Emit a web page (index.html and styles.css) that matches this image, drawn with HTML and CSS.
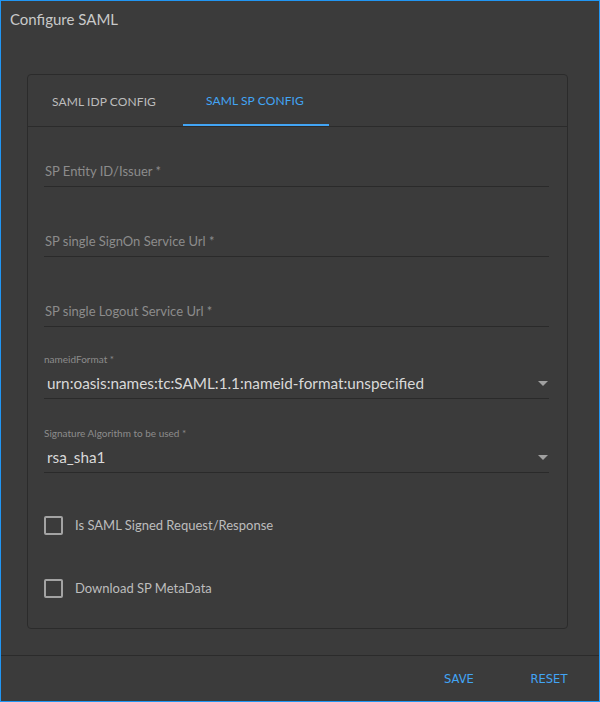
FILE: index.html
```html
<!DOCTYPE html>
<html>
<head>
<meta charset="utf-8">
<link rel="stylesheet" href="styles.css">
</head>
<body>
<div class="dialog">
  <div class="dialog-title">Configure SAML</div>
  <div class="dialog-content">
    <div class="card">
      <div class="tabs">
        <div class="tab">SAML IDP CONFIG</div>
        <div class="tab active">SAML SP CONFIG</div>
      </div>
      <div class="form">
        <div class="field text-field first"><span class="label">SP Entity ID/Issuer *</span></div>
        <div class="field text-field"><span class="label">SP single SignOn Service Url *</span></div>
        <div class="field text-field"><span class="label">SP single Logout Service Url *</span></div>
        <div class="field select-field sel1">
          <span class="small-label">nameidFormat *</span>
          <div class="value-row"><span class="value">urn:oasis:names:tc:SAML:1.1:nameid-format:unspecified</span><span class="arrow"></span></div>
        </div>
        <div class="field select-field sel2">
          <span class="small-label">Signature Algorithm to be used *</span>
          <div class="value-row"><span class="value">rsa_sha1</span><span class="arrow"></span></div>
        </div>
        <div class="check-row cb1"><span class="box"></span><span class="check-label">Is SAML Signed Request/Response</span></div>
        <div class="check-row cb2"><span class="box"></span><span class="check-label">Download SP MetaData</span></div>
      </div>
    </div>
  </div>
  <div class="dialog-actions">
    <span class="btn">SAVE</span>
    <span class="btn">RESET</span>
  </div>
</div>
</body>
</html>
```
FILE: styles.css
```css
html, body {
  margin: 0;
  padding: 0;
  background: #3b3b3b;
}
body {
  font-family: "Lato", "Noto Sans", sans-serif;
}
.dialog {
  box-sizing: border-box;
  width: 600px;
  height: 702px;
  border: 1px solid #2196f3;
  background: #3b3b3b;
  display: flex;
  flex-direction: column;
}
.dialog-title {
  padding: 7px 9px;
  height: 22px;
  line-height: 22px;
  font-size: 15px;
  color: #c9c9c9;
}
.dialog-content {
  padding: 37px 31px 0 26px;
}
.card {
  border: 1px solid #2b2b2b;
  border-radius: 4px;
  background: #3b3b3b;
}
.tabs {
  display: flex;
  height: 51px;
  border-bottom: 1px solid #2b2b2b;
}
.tab {
  box-sizing: border-box;
  height: 51px;
  padding: 2px 27px 0 24px;
  display: flex;
  align-items: center;
  font-size: 12px;
  color: #bdbdbd;
  letter-spacing: 0.1px;
}
.tab.active {
  color: #42a5f5;
  border-bottom: 2px solid #42a5f5;
  padding-left: 23px;
  padding-right: 25px;
}
.form {
  padding: 0 18px 20px 16px;
}
.field {
  box-sizing: border-box;
  height: 60px;
  border-bottom: 1px solid #2a2a2a;
  display: flex;
  flex-direction: column;
}
.text-field {
  margin-top: 10px;
  justify-content: flex-end;
  padding-bottom: 5px;
}
.text-field.first {
  margin-top: 0;
}
.label {
  font-size: 13px;
  line-height: 20px;
  color: #8c8c8c;
  padding-left: 1px;
}
.select-field {
  padding-top: 13px;
}
.sel1 { margin-top: 12px; }
.sel2 { margin-top: 14px; }
.small-label {
  font-size: 10px;
  line-height: 14px;
  color: #8c8c8c;
  height: 14px;
}
.value-row {
  margin-top: 6px;
  display: flex;
  align-items: center;
  justify-content: space-between;
  height: 22px;
}
.value {
  font-size: 15.3px;
  line-height: 22px;
  color: #d9d9d9;
  padding-left: 3px;
}
.arrow {
  width: 0;
  height: 0;
  border-left: 5px solid transparent;
  border-right: 5px solid transparent;
  border-top: 5px solid #a0a0a0;
  margin-right: 1px;
}
.check-row {
  height: 40px;
  display: flex;
  align-items: center;
}
.cb1 { margin-top: 32px; }
.cb2 { margin-top: 23px; }
.box {
  box-sizing: border-box;
  width: 19px;
  height: 19px;
  border: 2px solid #a3a3a3;
  border-radius: 2px;
  margin-right: 12px;
}
.check-label {
  font-size: 13px;
  color: #bdbdbd;
}
.dialog-actions {
  margin-top: 26px;
  border-top: 1px solid #2b2b2b;
  flex: 1;
  display: flex;
  justify-content: flex-end;
  align-items: center;
  padding-right: 18px;
  gap: 26px;
}
.btn {
  min-width: 64px;
  text-align: center;
  font-family: "DejaVu Sans", sans-serif;
  font-size: 11.5px;
  color: #42a5f5;
}
```
